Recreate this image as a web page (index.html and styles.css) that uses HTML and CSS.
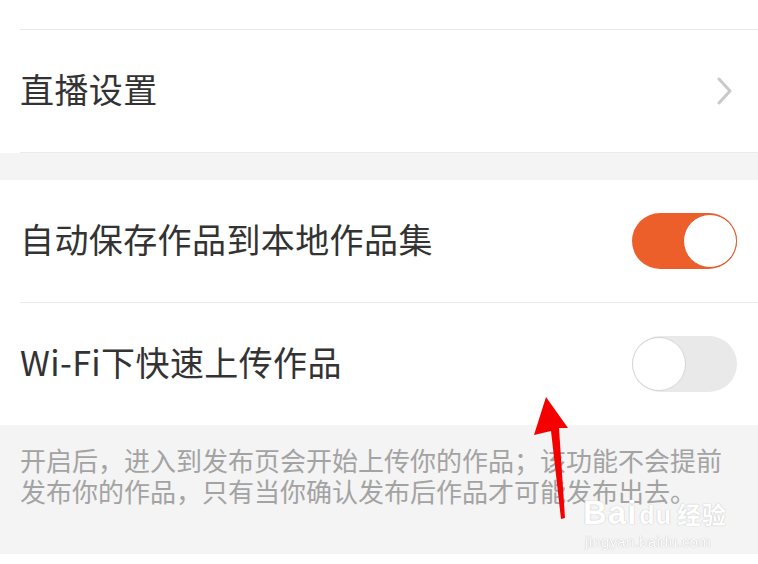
FILE: index.html
```html
<!DOCTYPE html>
<html>
<head>
  <meta charset="UTF-8">
  <title>设置</title>
<link rel="stylesheet" href="styles.css">
</head>
<body>

  <div class="page">
    <div class="group">
      <div class="top-gap"></div>
      <div class="row">
        <span class="label">直播设置</span>
        <svg class="chevron" width="16" height="28" viewBox="0 0 16 28">
          <polyline points="2,2 13,14 2,26" fill="none" stroke="#c9c9c9" stroke-width="3" stroke-linecap="round" stroke-linejoin="round"/>
        </svg>
      </div>
    </div>

    <div class="spacer"></div>

    <div class="group">
      <div class="row">
        <span class="label">自动保存作品到本地作品集</span>
        <div class="switch on"><div class="knob"></div></div>
      </div>
      <div class="row last">
        <span class="label">Wi-Fi下快速上传作品</span>
        <div class="switch"><div class="knob"></div></div>
      </div>
    </div>

    <div class="note">
      开启后，进入到发布页会开始上传你的作品；该功能不会提前发布你的作品，只有当你确认发布后作品才可能发布出去。
    </div>
  </div>

  <!-- 水印 -->
  <div class="watermark">
    <div class="wm-logo">Bai<span class="wm-du">du</span><span class="wm-cn">经验</span></div>
    <div class="wm-url">jingyan.baidu.com</div>
  </div>

  <!-- 红色箭头 -->
  <svg class="arrow" width="758" height="564" viewBox="0 0 758 564">
    <polygon points="546,397 568,428 559,428 565,518 561,519 551,431 534,435" fill="#f40000"/>
  </svg>

</body>
</html>
```

FILE: styles.css
```css
body, html {
  margin: 0;
  padding: 0;
  background: #fff;
  font-family: "Noto Sans CJK SC", "Noto Sans", sans-serif;
}
.page {
  width: 758px;
  height: 564px;
  overflow: hidden;
  display: flex;
  flex-direction: column;
}
.group {
  background: #fff;
}
.top-gap {
  height: 29px;
  margin-left: 20px;
  border-bottom: 1px solid #e8e8e8;
}
.row {
  height: 122px;
  margin-left: 20px;
  padding-right: 21px;
  border-bottom: 1px solid #ebebeb;
  display: flex;
  align-items: center;
  justify-content: space-between;
}
.row.last {
  border-bottom: none;
}
.label {
  font-size: 34px;
  color: #333;
  letter-spacing: 0.4px;
  margin-bottom: 5px;
}
.chevron {
  margin-right: 4px;
}
.spacer {
  height: 27px;
  background: #f4f4f4;
}
.switch {
  width: 105px;
  height: 56px;
  border-radius: 28px;
  background: #e9e9e9;
  display: flex;
  align-items: center;
  justify-content: flex-start;
  box-sizing: border-box;
}
.switch.on {
  background: #ec5f2b;
  justify-content: flex-end;
}
.knob {
  width: 54px;
  height: 54px;
  border-radius: 50%;
  background: #fff;
  box-sizing: border-box;
  border: 1.5px solid #d6d6d6;
}
.switch.on .knob {
  border-color: #e2582a;
}
.note {
  background: #f4f4f4;
  height: 129px;
  padding: 19px 20px 0 20px;
  box-sizing: border-box;
  font-size: 26px;
  line-height: 31px;
  color: #a3a3a3;
}
.watermark {
  position: absolute;
  left: 583px;
  top: 495px;
  color: #fff;
  font-family: "Liberation Sans", "Noto Sans CJK SC", sans-serif;
  text-shadow: 0 0 1px #c4c4c4, 0 0 1px #c4c4c4;
}
.wm-logo {
  font-size: 33px;
  line-height: 36px;
  font-weight: bold;
  letter-spacing: 1px;
}
.wm-du {
  font-size: 25px;
  margin-left: 2px;
}
.wm-cn {
  font-family: "Noto Sans CJK SC", sans-serif;
  font-size: 24px;
  margin-left: 5px;
}
.wm-url {
  font-size: 15px;
  line-height: 18px;
  margin-left: 2px;
  letter-spacing: 0.3px;
}
.arrow {
  position: absolute;
  left: 0;
  top: 0;
}
```
